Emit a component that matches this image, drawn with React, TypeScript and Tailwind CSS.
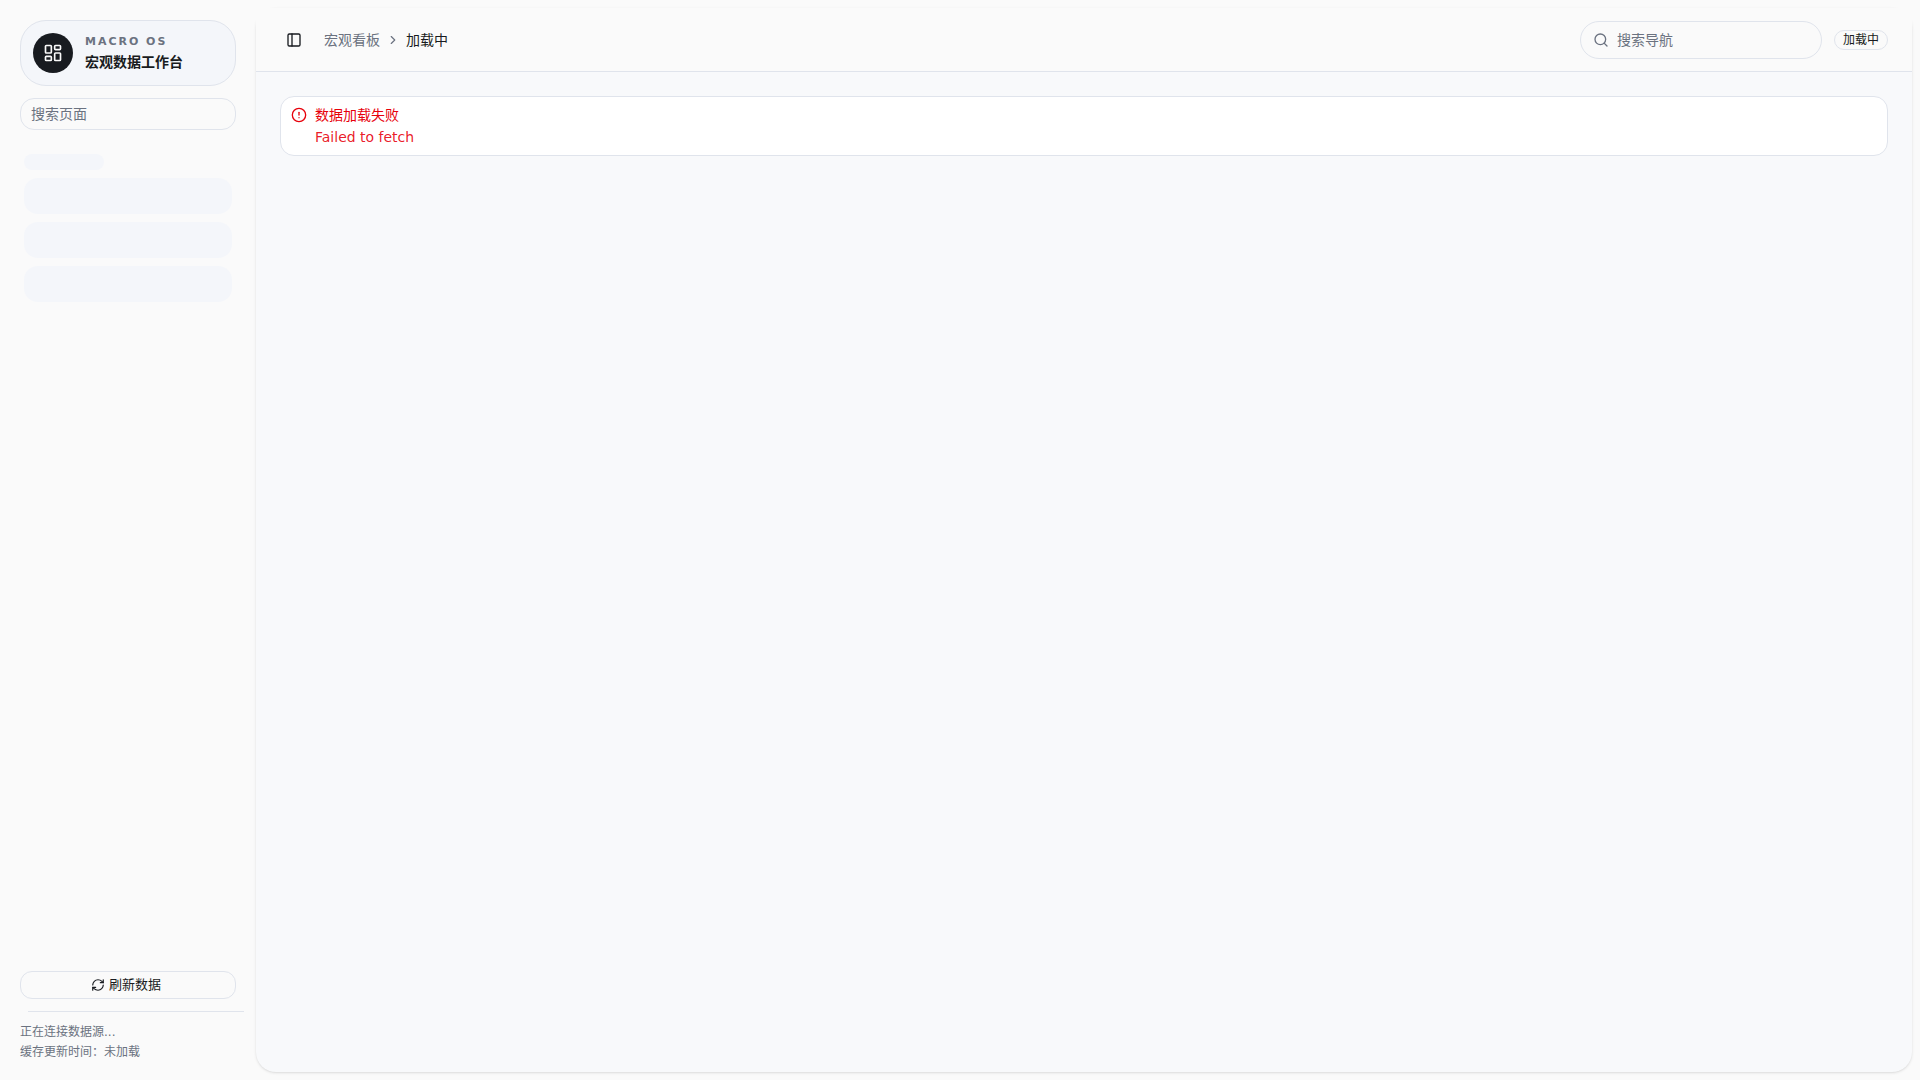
import {
  ChevronRight,
  CircleAlert,
  LayoutDashboard,
  PanelLeft,
  RefreshCw,
  Search,
} from "lucide-react";

const skeletonRows = [1, 2, 3];

/**
 * Sidebar with brand card, page search and data status
 */
const AppSidebar = () => {
  return (
    <aside className="flex w-64 shrink-0 flex-col px-5 pt-5 pb-4.5">
      <div className="flex items-center gap-3 rounded-[26px] border border-[#e0e4ec] bg-[#f4f6fa] p-3">
        <div className="flex size-10 shrink-0 items-center justify-center rounded-full bg-[#181b20] text-[#fafafa]">
          <LayoutDashboard className="size-5" strokeWidth={2} />
        </div>
        <div className="min-w-0">
          <p className="text-[11px] leading-[18px] font-semibold tracking-[0.18em] text-[#6b7280]">
            MACRO OS
          </p>
          <h1 className="truncate text-sm leading-[22px] font-semibold">
            宏观数据工作台
          </h1>
        </div>
      </div>

      <input
        type="search"
        aria-label="搜索页面"
        placeholder="搜索页面"
        className="mt-3 h-8 w-full min-w-0 rounded-[14px] border border-[#e0e4ec] bg-transparent px-2.5 text-sm outline-none placeholder:text-[#6b7280]"
      />

      <nav aria-label="页面导航" className="flex flex-1 flex-col gap-2 px-1 pt-6">
        <div className="h-4 w-20 rounded-[10px] bg-[#f4f6fa]" />
        {skeletonRows.map((row) => (
          <div key={row} className="h-9 rounded-[14px] bg-[#f4f6fa]" />
        ))}
      </nav>

      <button
        type="button"
        className="flex h-7 w-full items-center justify-center gap-1 rounded-xl border border-[#e0e4ec] pr-1 text-[13px]"
      >
        <RefreshCw className="size-3.5" />
        刷新数据
      </button>
      <div className="mt-3 -mr-2 ml-2 h-px bg-[#e0e4ec]" />
      <div className="pt-2.5 text-xs leading-5 text-[#6b7280]">
        <p>正在连接数据源...</p>
        <p>缓存更新时间：未加载</p>
      </div>
    </aside>
  );
};

/**
 * Top bar with breadcrumb, navigation search and status badge
 */
const AppHeader = () => {
  return (
    <header className="flex h-16 items-center justify-between border-b border-[#e0e4ec] bg-[#fafafa] px-6">
      <div className="flex items-center gap-4">
        <button
          type="button"
          aria-label="切换侧边栏"
          className="flex size-7 items-center justify-center rounded-lg"
        >
          <PanelLeft className="size-4" />
        </button>
        <nav aria-label="面包屑">
          <ol className="flex items-center gap-1.5 text-sm text-[#6b7280]">
            <li>
              <a href="#dashboard">宏观看板</a>
            </li>
            <li aria-hidden="true">
              <ChevronRight className="size-3.5" />
            </li>
            <li aria-current="page" className="text-[#181b20]">
              加载中
            </li>
          </ol>
        </nav>
      </div>
      <div className="flex items-center gap-3">
        <label className="flex items-center gap-2 rounded-full border border-[#e0e4ec] px-3 text-[#6b7280]">
          <Search className="size-4 shrink-0" />
          <input
            type="search"
            aria-label="搜索导航"
            placeholder="搜索导航"
            className="h-9 w-48 bg-transparent text-sm outline-none placeholder:text-[#6b7280]"
          />
        </label>
        <span className="flex h-5 items-center rounded-full border border-[#e0e4ec] px-2 text-xs">
          加载中
        </span>
      </div>
    </header>
  );
};

export default function App() {
  return (
    <div className="flex min-h-screen bg-[#fafafa] font-['DejaVu_Sans','Noto_Sans_CJK_SC',sans-serif] text-[#181b20]">
      <AppSidebar />
      <div className="my-2 mr-2 flex min-w-0 flex-1 flex-col rounded-[20px] bg-[#f8f9fb] shadow-sm">
        <AppHeader />
        <main className="p-6">
          <div
            role="alert"
            className="flex gap-2 rounded-[14px] border border-[#e0e4ec] bg-white px-2.5 py-2 text-sm text-[#e7000b]"
          >
            <CircleAlert className="mt-0.5 size-4 shrink-0" />
            <div>
              <p className="leading-5">数据加载失败</p>
              <p className="mt-0.5 leading-5 text-[#e7000b]/90">
                Failed to fetch
              </p>
            </div>
          </div>
        </main>
      </div>
    </div>
  );
}
